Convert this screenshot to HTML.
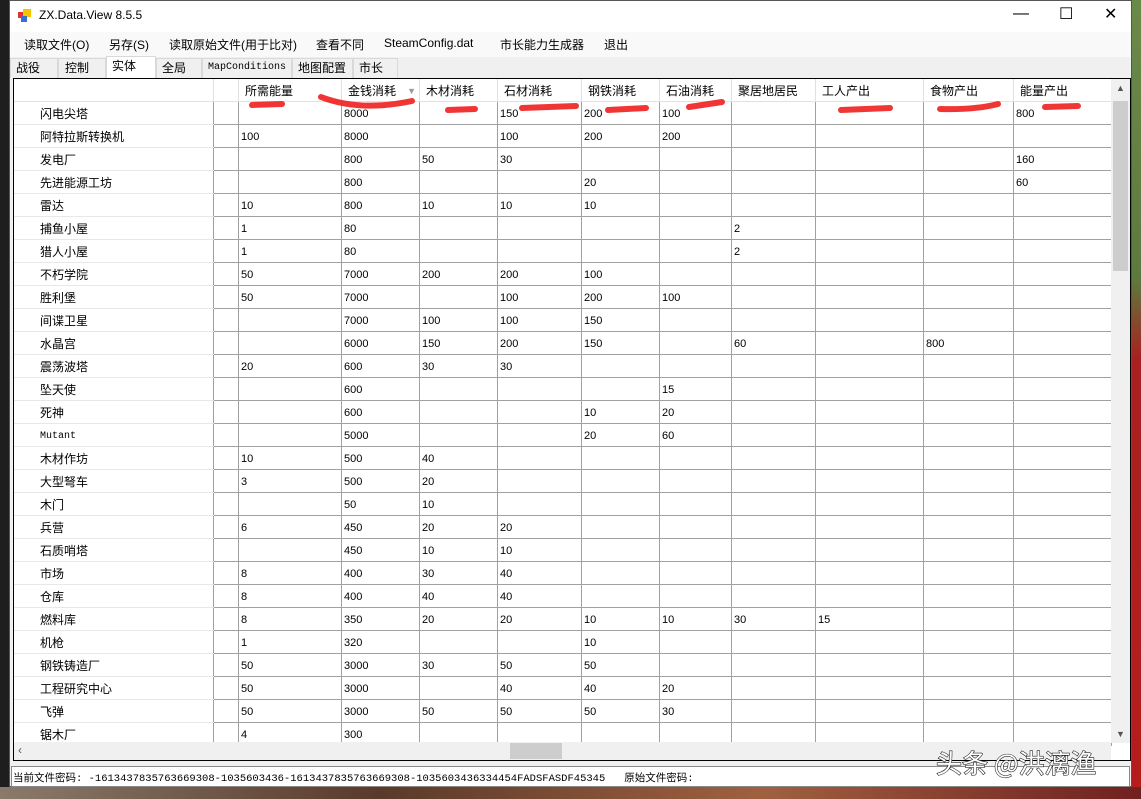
<!DOCTYPE html><html><head><meta charset="utf-8"><style>
*{margin:0;padding:0;box-sizing:border-box}
body{width:1141px;height:799px;overflow:hidden;position:relative;font-family:"Liberation Sans","Noto Sans CJK SC",sans-serif;font-size:12px;color:#000;background:linear-gradient(180deg,#6a8a4a 0%,#5c7a3e 35%,#a82020 45%,#b81c1c 100%)}
.left{position:absolute;left:0;top:0;width:9px;height:799px;background:#1e1e1e}
.bot{position:absolute;left:0;top:787px;width:1141px;height:12px;background:linear-gradient(90deg,#8a7a6a,#5a3a2a,#a06040,#702020)}
.win{position:absolute;left:9px;top:0;width:1123px;height:787px;background:#f0f0f0;border:1px solid #555}
.title{height:31px;background:#fff;position:relative}
.title span{position:absolute;left:29px;top:7px;font-size:12px}
.menu{height:25px;background:#f9f9f9;position:relative}
.menu span{position:absolute;top:4px;font-size:12px}
.tabs{height:21px;position:relative}
.tab{position:absolute;top:1px;height:20px;border:1px solid #d9d9d9;border-bottom:none;background:#f0f0f0;padding:0 5px;font-size:12px;line-height:18px}
.grid{position:absolute;left:3px;top:77px;width:1118px;height:683px;border:1px solid #000;background:#fff;overflow:hidden}
table{border-collapse:collapse;position:absolute;left:-1px;top:-1px;table-layout:fixed}
tr{height:23px}
td{border:1px solid #a0a0a0;font-size:11px;padding:2px 0 0 2px;vertical-align:middle;white-space:nowrap;overflow:hidden;line-height:13px}
td.rh{border-color:#e8e8e8 #a0a0a0 #e8e8e8 transparent;font-size:12px;padding-left:26px}
tr.h{height:23px}
tr.h td{font-size:12px;padding-left:6px;border-color:#e0e0e0}
.vs{position:absolute;left:1097px;top:0;width:19px;height:664px;background:#f0f0f0}
.hs{position:absolute;left:0;top:663px;width:1097px;height:18px;background:#f0f0f0}
.status{position:absolute;left:1px;top:765px;width:1119px;height:21px;background:#fff;border:1px solid #888;font-family:"Liberation Mono","Noto Sans CJK SC",monospace;font-size:10.5px;padding:3px 0 0 1px;letter-spacing:0}
svg{position:absolute;left:0;top:0}
</style></head><body>
<div class="left"></div><div class="bot"></div>
<div class="win">
<div class="title"><svg width="20" height="20" style="left:7px;top:7px"><rect x="1" y="4" width="6" height="6" fill="#d33"/><rect x="6" y="1" width="8" height="8" fill="#f5c400"/><rect x="4" y="8" width="6" height="6" fill="#3a6fd0"/></svg><span>ZX.Data.View 8.5.5</span>
<span style="left:1003px;top:4px;font-size:16px">—</span><span style="left:1049px;top:3px;font-size:16px">☐</span><span style="left:1094px;top:3px;font-size:16px">✕</span></div>
<div class="menu"><span style="left:14px">读取文件(O)</span><span style="left:99px">另存(S)</span><span style="left:159px">读取原始文件(用于比对)</span><span style="left:306px">查看不同</span><span style="left:374px">SteamConfig.dat</span><span style="left:490px">市长能力生成器</span><span style="left:594px">退出</span></div>
<div class="tabs">
<div class="tab" style="left:0;width:48px">战役</div><div class="tab" style="left:48px;width:48px;padding-left:6px">控制</div><div class="tab" style="left:96px;width:50px;background:#fff;top:-1px;height:22px">实体</div><div class="tab" style="left:146px;width:46px">全局</div><div class="tab" style="left:192px;width:90px;font-family:'Liberation Mono',monospace;font-size:10px">MapConditions</div><div class="tab" style="left:282px;width:61px">地图配置</div><div class="tab" style="left:343px;width:45px">市长</div></div>
<div class="grid">
<table>
<colgroup><col width="200"><col width="25"><col width="103"><col width="78"><col width="78"><col width="84"><col width="78"><col width="72"><col width="84"><col width="108"><col width="90"><col width="98"></colgroup>
<tr class="h"><td></td><td></td><td>所需能量</td><td>金钱消耗 <span style="color:#999;font-size:9px;float:right;margin-right:3px">▼</span></td><td>木材消耗</td><td>石材消耗</td><td>钢铁消耗</td><td>石油消耗</td><td>聚居地居民</td><td>工人产出</td><td>食物产出</td><td>能量产出</td></tr>
<tr><td class="rh">闪电尖塔</td><td></td><td></td><td>8000</td><td></td><td>150</td><td>200</td><td>100</td><td></td><td></td><td></td><td>800</td></tr>
<tr><td class="rh">阿特拉斯转换机</td><td></td><td>100</td><td>8000</td><td></td><td>100</td><td>200</td><td>200</td><td></td><td></td><td></td><td></td></tr>
<tr><td class="rh">发电厂</td><td></td><td></td><td>800</td><td>50</td><td>30</td><td></td><td></td><td></td><td></td><td></td><td>160</td></tr>
<tr><td class="rh">先进能源工坊</td><td></td><td></td><td>800</td><td></td><td></td><td>20</td><td></td><td></td><td></td><td></td><td>60</td></tr>
<tr><td class="rh">雷达</td><td></td><td>10</td><td>800</td><td>10</td><td>10</td><td>10</td><td></td><td></td><td></td><td></td><td></td></tr>
<tr><td class="rh">捕鱼小屋</td><td></td><td>1</td><td>80</td><td></td><td></td><td></td><td></td><td>2</td><td></td><td></td><td></td></tr>
<tr><td class="rh">猎人小屋</td><td></td><td>1</td><td>80</td><td></td><td></td><td></td><td></td><td>2</td><td></td><td></td><td></td></tr>
<tr><td class="rh">不朽学院</td><td></td><td>50</td><td>7000</td><td>200</td><td>200</td><td>100</td><td></td><td></td><td></td><td></td><td></td></tr>
<tr><td class="rh">胜利堡</td><td></td><td>50</td><td>7000</td><td></td><td>100</td><td>200</td><td>100</td><td></td><td></td><td></td><td></td></tr>
<tr><td class="rh">间谍卫星</td><td></td><td></td><td>7000</td><td>100</td><td>100</td><td>150</td><td></td><td></td><td></td><td></td><td></td></tr>
<tr><td class="rh">水晶宫</td><td></td><td></td><td>6000</td><td>150</td><td>200</td><td>150</td><td></td><td>60</td><td></td><td>800</td><td></td></tr>
<tr><td class="rh">震荡波塔</td><td></td><td>20</td><td>600</td><td>30</td><td>30</td><td></td><td></td><td></td><td></td><td></td><td></td></tr>
<tr><td class="rh">坠天使</td><td></td><td></td><td>600</td><td></td><td></td><td></td><td>15</td><td></td><td></td><td></td><td></td></tr>
<tr><td class="rh">死神</td><td></td><td></td><td>600</td><td></td><td></td><td>10</td><td>20</td><td></td><td></td><td></td><td></td></tr>
<tr><td class="rh" style="font-family:'Liberation Mono',monospace;font-size:10px">Mutant</td><td></td><td></td><td>5000</td><td></td><td></td><td>20</td><td>60</td><td></td><td></td><td></td><td></td></tr>
<tr><td class="rh">木材作坊</td><td></td><td>10</td><td>500</td><td>40</td><td></td><td></td><td></td><td></td><td></td><td></td><td></td></tr>
<tr><td class="rh">大型弩车</td><td></td><td>3</td><td>500</td><td>20</td><td></td><td></td><td></td><td></td><td></td><td></td><td></td></tr>
<tr><td class="rh">木门</td><td></td><td></td><td>50</td><td>10</td><td></td><td></td><td></td><td></td><td></td><td></td><td></td></tr>
<tr><td class="rh">兵营</td><td></td><td>6</td><td>450</td><td>20</td><td>20</td><td></td><td></td><td></td><td></td><td></td><td></td></tr>
<tr><td class="rh">石质哨塔</td><td></td><td></td><td>450</td><td>10</td><td>10</td><td></td><td></td><td></td><td></td><td></td><td></td></tr>
<tr><td class="rh">市场</td><td></td><td>8</td><td>400</td><td>30</td><td>40</td><td></td><td></td><td></td><td></td><td></td><td></td></tr>
<tr><td class="rh">仓库</td><td></td><td>8</td><td>400</td><td>40</td><td>40</td><td></td><td></td><td></td><td></td><td></td><td></td></tr>
<tr><td class="rh">燃料库</td><td></td><td>8</td><td>350</td><td>20</td><td>20</td><td>10</td><td>10</td><td>30</td><td>15</td><td></td><td></td></tr>
<tr><td class="rh">机枪</td><td></td><td>1</td><td>320</td><td></td><td></td><td>10</td><td></td><td></td><td></td><td></td><td></td></tr>
<tr><td class="rh">钢铁铸造厂</td><td></td><td>50</td><td>3000</td><td>30</td><td>50</td><td>50</td><td></td><td></td><td></td><td></td><td></td></tr>
<tr><td class="rh">工程研究中心</td><td></td><td>50</td><td>3000</td><td></td><td>40</td><td>40</td><td>20</td><td></td><td></td><td></td><td></td></tr>
<tr><td class="rh">飞弹</td><td></td><td>50</td><td>3000</td><td>50</td><td>50</td><td>50</td><td>30</td><td></td><td></td><td></td><td></td></tr>
<tr><td class="rh">锯木厂</td><td></td><td>4</td><td>300</td><td></td><td></td><td></td><td></td><td></td><td></td><td></td><td></td></tr>
</table>
<div class="vs"><div style="position:absolute;left:2px;top:22px;width:15px;height:170px;background:#cdcdcd"></div><div style="position:absolute;left:5px;top:4px;font-size:9px;color:#555">▲</div><div style="position:absolute;left:5px;top:650px;font-size:9px;color:#555">▼</div></div>
<div class="hs"><div style="position:absolute;left:496px;top:1px;width:52px;height:16px;background:#cdcdcd"></div><div style="position:absolute;left:4px;top:1px;font-size:12px;color:#555">‹</div></div>
</div>
<div class="status">当前文件密码: -1613437835763669308-1035603436-1613437835763669308-1035603436334454FADSFASDF45345 &nbsp; 原始文件密码:</div>
</div>
<svg width="1141" height="799" style="pointer-events:none">
<g stroke="#f02020" stroke-width="6" stroke-linecap="round" fill="none" opacity=".9">
<path d="M252 105 L282 104"/><path d="M321 97 Q360 112 412 101"/><path d="M448 110 L475 109"/><path d="M522 108 L576 106"/><path d="M608 110 L646 108"/><path d="M689 107 L722 102"/><path d="M841 110 L890 108"/><path d="M940 109 Q975 110 998 104"/><path d="M1045 107 L1078 106"/>
</g>
<text x="936" y="773" font-family="Noto Sans CJK SC,sans-serif" font-size="26" fill="#fff" stroke="#222" stroke-width="1.2" paint-order="stroke">头条 @洪漓渔</text>
</svg>
</body></html>
